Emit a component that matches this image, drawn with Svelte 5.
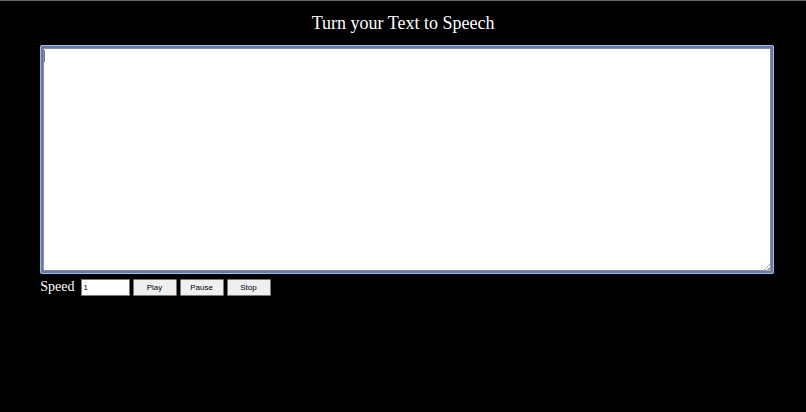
<script>
  import { onMount } from "svelte";

  let text = "";
  let speed = 1;
  let box;

  onMount(() => {
    box.focus();
  });

  function play() {
    if (speechSynthesis.paused && speechSynthesis.speaking) {
      speechSynthesis.resume();
      return;
    }
    const utterance = new SpeechSynthesisUtterance(text);
    utterance.rate = speed || 1;
    speechSynthesis.speak(utterance);
  }

  function pause() {
    speechSynthesis.pause();
  }

  function stop() {
    speechSynthesis.resume();
    speechSynthesis.cancel();
  }
</script>

<main>
  <h1>Turn your Text to Speech</h1>

  <div class="editor">
    <textarea bind:this={box} bind:value={text} aria-label="Text to read"></textarea>
    {#if text === ""}
      <span class="caret"></span>
    {/if}
  </div>

  <div class="controls">
    <label for="speed">Speed</label>
    <input type="number" id="speed" min="0.5" max="3" step="0.5" bind:value={speed} />
    <button type="button" on:click={play}>Play</button>
    <button type="button" on:click={pause}>Pause</button>
    <button type="button" on:click={stop}>Stop</button>
  </div>
</main>

<style>
  :global(body) {
    background-color: #000;
  }

  main {
    border-top: 1px solid #666;
    padding: 0 4% 0 5%;
    color: #fff;
    font-family: "Liberation Serif", "Times New Roman", serif;
  }

  h1 {
    margin: 0;
    padding: 12px 8px 12px 0;
    font-size: 18px;
    font-weight: 400;
    line-height: 20px;
    text-align: center;
  }

  .editor {
    position: relative;
    display: flex;
  }

  textarea {
    width: 100%;
    height: 229px;
    box-sizing: border-box;
    padding: 2px;
    background-color: #fff;
    border: 3px solid #5f7bb0;
    border-radius: 2px;
    box-shadow: inset 0 0 0 1px #8b8b92;
    outline: 1px solid #a9b8d8;
    outline-offset: -1px;
    font-family: "Liberation Mono", monospace;
    font-size: 11px;
    caret-color: transparent;
  }

  textarea::-webkit-resizer {
    background: linear-gradient(135deg, transparent 72%, #aaa 72%, #aaa 76%, transparent 76%, transparent 82%, #aaa 82%);
  }

  .caret {
    position: absolute;
    top: 5px;
    left: 4px;
    width: 1px;
    height: 12px;
    background-color: #777;
  }

  .controls {
    display: flex;
    align-items: flex-start;
    gap: 3px;
    padding-top: 5px;
  }

  label {
    margin-right: 3px;
    font-size: 14px;
    line-height: 15px;
  }

  input,
  button {
    box-sizing: border-box;
    height: 17px;
    font-family: "Liberation Sans", Arial, sans-serif;
    font-size: 8px;
    color: #000;
  }

  input {
    width: 49px;
    padding: 0 2px;
    background-color: #fff;
    border: 1px solid #777;
    appearance: textfield;
  }

  button {
    width: 44px;
    padding: 0;
    background-color: #efefef;
    border: 1px solid #777;
    border-radius: 1px;
  }
</style>
